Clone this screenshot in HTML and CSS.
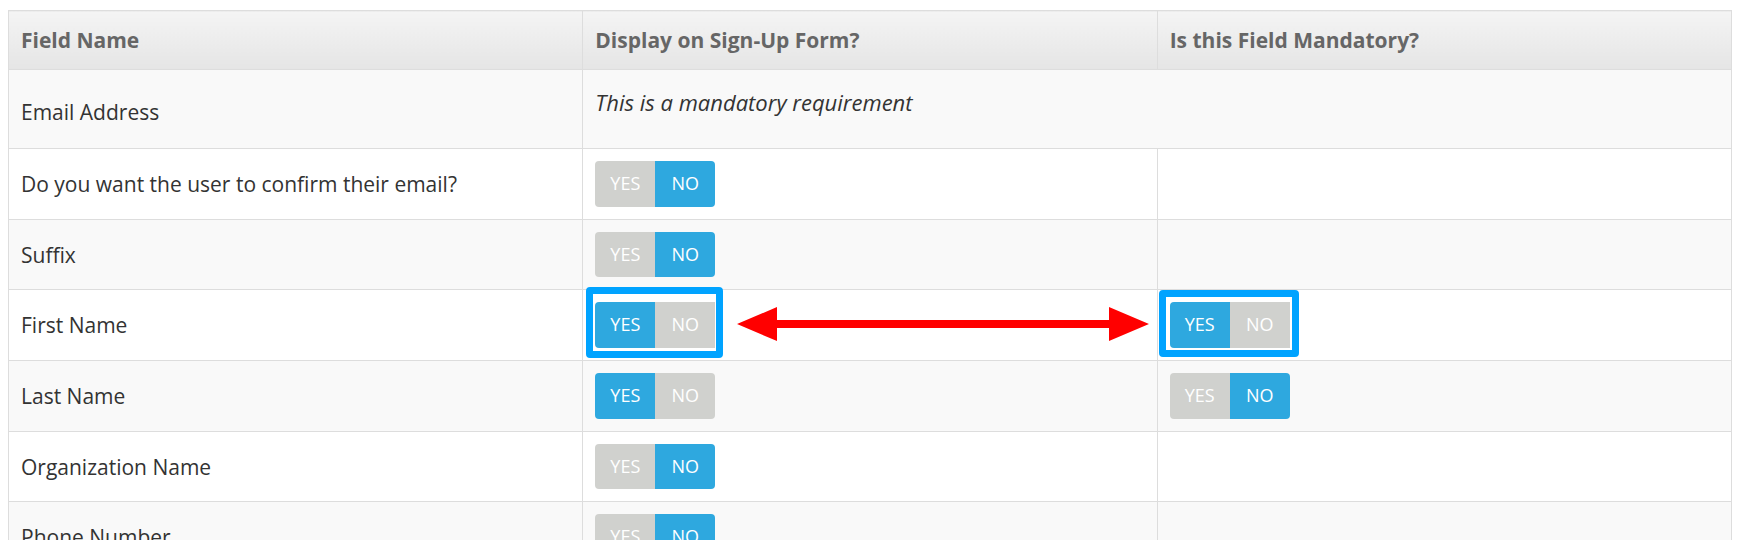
FILE: index.html
```html
<!DOCTYPE html>
<html>
<head>
	<meta charset="utf-8">
	<title>Sign-Up Form Fields</title>
	<link rel="stylesheet" href="styles.css">
</head>
<body>
	<div class="page">
		<div class="fields">
			<table class="field-table">
				<thead>
					<tr>
						<th>Field Name</th>
						<th>Display on Sign-Up Form?</th>
						<th>Is this Field Mandatory?</th>
					</tr>
				</thead>
				<tbody>
					<tr class="row-email">
						<td class="email-name">Email Address</td>
						<td class="email-note" colspan="2"><em>This is a mandatory requirement</em></td>
					</tr>
					<tr>
						<td>Do you want the user to confirm their email?</td>
						<td><div class="switch"><span class="off">YES</span><span class="on">NO</span></div></td>
						<td></td>
					</tr>
					<tr>
						<td>Suffix</td>
						<td><div class="switch"><span class="off">YES</span><span class="on">NO</span></div></td>
						<td></td>
					</tr>
					<tr>
						<td>First Name</td>
						<td><div class="switch"><span class="on">YES</span><span class="off">NO</span><i class="mark mark-left"></i></div></td>
						<td><div class="switch"><span class="on">YES</span><span class="off">NO</span><i class="mark mark-right"></i></div></td>
					</tr>
					<tr>
						<td>Last Name</td>
						<td><div class="switch"><span class="on">YES</span><span class="off">NO</span></div></td>
						<td><div class="switch"><span class="off">YES</span><span class="on">NO</span></div></td>
					</tr>
					<tr>
						<td>Organization Name</td>
						<td><div class="switch"><span class="off">YES</span><span class="on">NO</span></div></td>
						<td></td>
					</tr>
					<tr>
						<td>Phone Number</td>
						<td><div class="switch"><span class="off">YES</span><span class="on">NO</span></div></td>
						<td></td>
					</tr>
				</tbody>
			</table>

			<!-- annotation arrow between the two marked switches -->
			<svg class="arrow" width="412" height="34" viewBox="0 0 412 34">
				<polygon fill="#ff0000" points="0,17 40,0 40,13 372,13 372,0 412,17 372,34 372,21 40,21 40,34"/>
			</svg>
		</div>
	</div>
</body>
</html>
```

FILE: styles.css
```css
:root {
	--border: #dddddd;
	--switch-on: #2ea8df;
	--switch-off: #d0d1ce;
	--mark: #00a3ff;
}

html,
body {
	margin: 0;
	overflow: hidden;
	background-color: #ffffff;
}

body {
	color: #333333;
	font-family: 'Open Sans', 'Noto Sans', sans-serif;
	font-size: 21px;
	line-height: 30px;
}

.page {
	padding: 10px 0 0 8px;
}

.fields {
	position: relative;
	width: 1724px;
}

.field-table {
	border-collapse: collapse;
	table-layout: fixed;
	width: 1724px;
}

.field-table th,
.field-table td {
	border: 1px solid var(--border);
	padding: 12px;
	text-align: left;
	vertical-align: middle;
}

.field-table th {
	background-image: linear-gradient(to bottom, #f4f4f4, #e5e5e5);
	color: #666666;
	font-weight: 700;
	padding-top: 13.5px;
	padding-bottom: 14.5px;
}

.field-table tbody tr:nth-child(odd) {
	background-color: #f9f9f9;
}

.row-email td {
	vertical-align: top;
}

.row-email .email-name {
	padding-top: 27px;
	padding-bottom: 21px;
}

.row-email .email-note {
	font-size: 22px;
	padding-top: 17px;
	padding-bottom: 31px;
}

.email-note em {
	font-style: italic;
}

.switch {
	display: flex;
	position: relative;
	width: 120px;
	height: 45.7px;
}

.switch span {
	color: #ffffff;
	flex: 1;
	font-size: 18px;
	line-height: 45.7px;
	text-align: center;
}

.switch span:first-child {
	border-radius: 4px 0 0 4px;
}

.switch span:last-child {
	border-radius: 0 4px 4px 0;
}

.switch .on {
	background-color: var(--switch-on);
}

.switch .off {
	background-color: var(--switch-off);
}

.mark {
	border: 7px solid var(--mark);
	border-radius: 4px;
	position: absolute;
	pointer-events: none;
}

.mark-left {
	left: -9px;
	right: -8px;
	top: -15px;
	bottom: -10px;
}

.mark-right {
	left: -11px;
	right: -9px;
	top: -12px;
	bottom: -9px;
}

.arrow {
	display: block;
	left: 729px;
	position: absolute;
	top: 297px;
}
```
